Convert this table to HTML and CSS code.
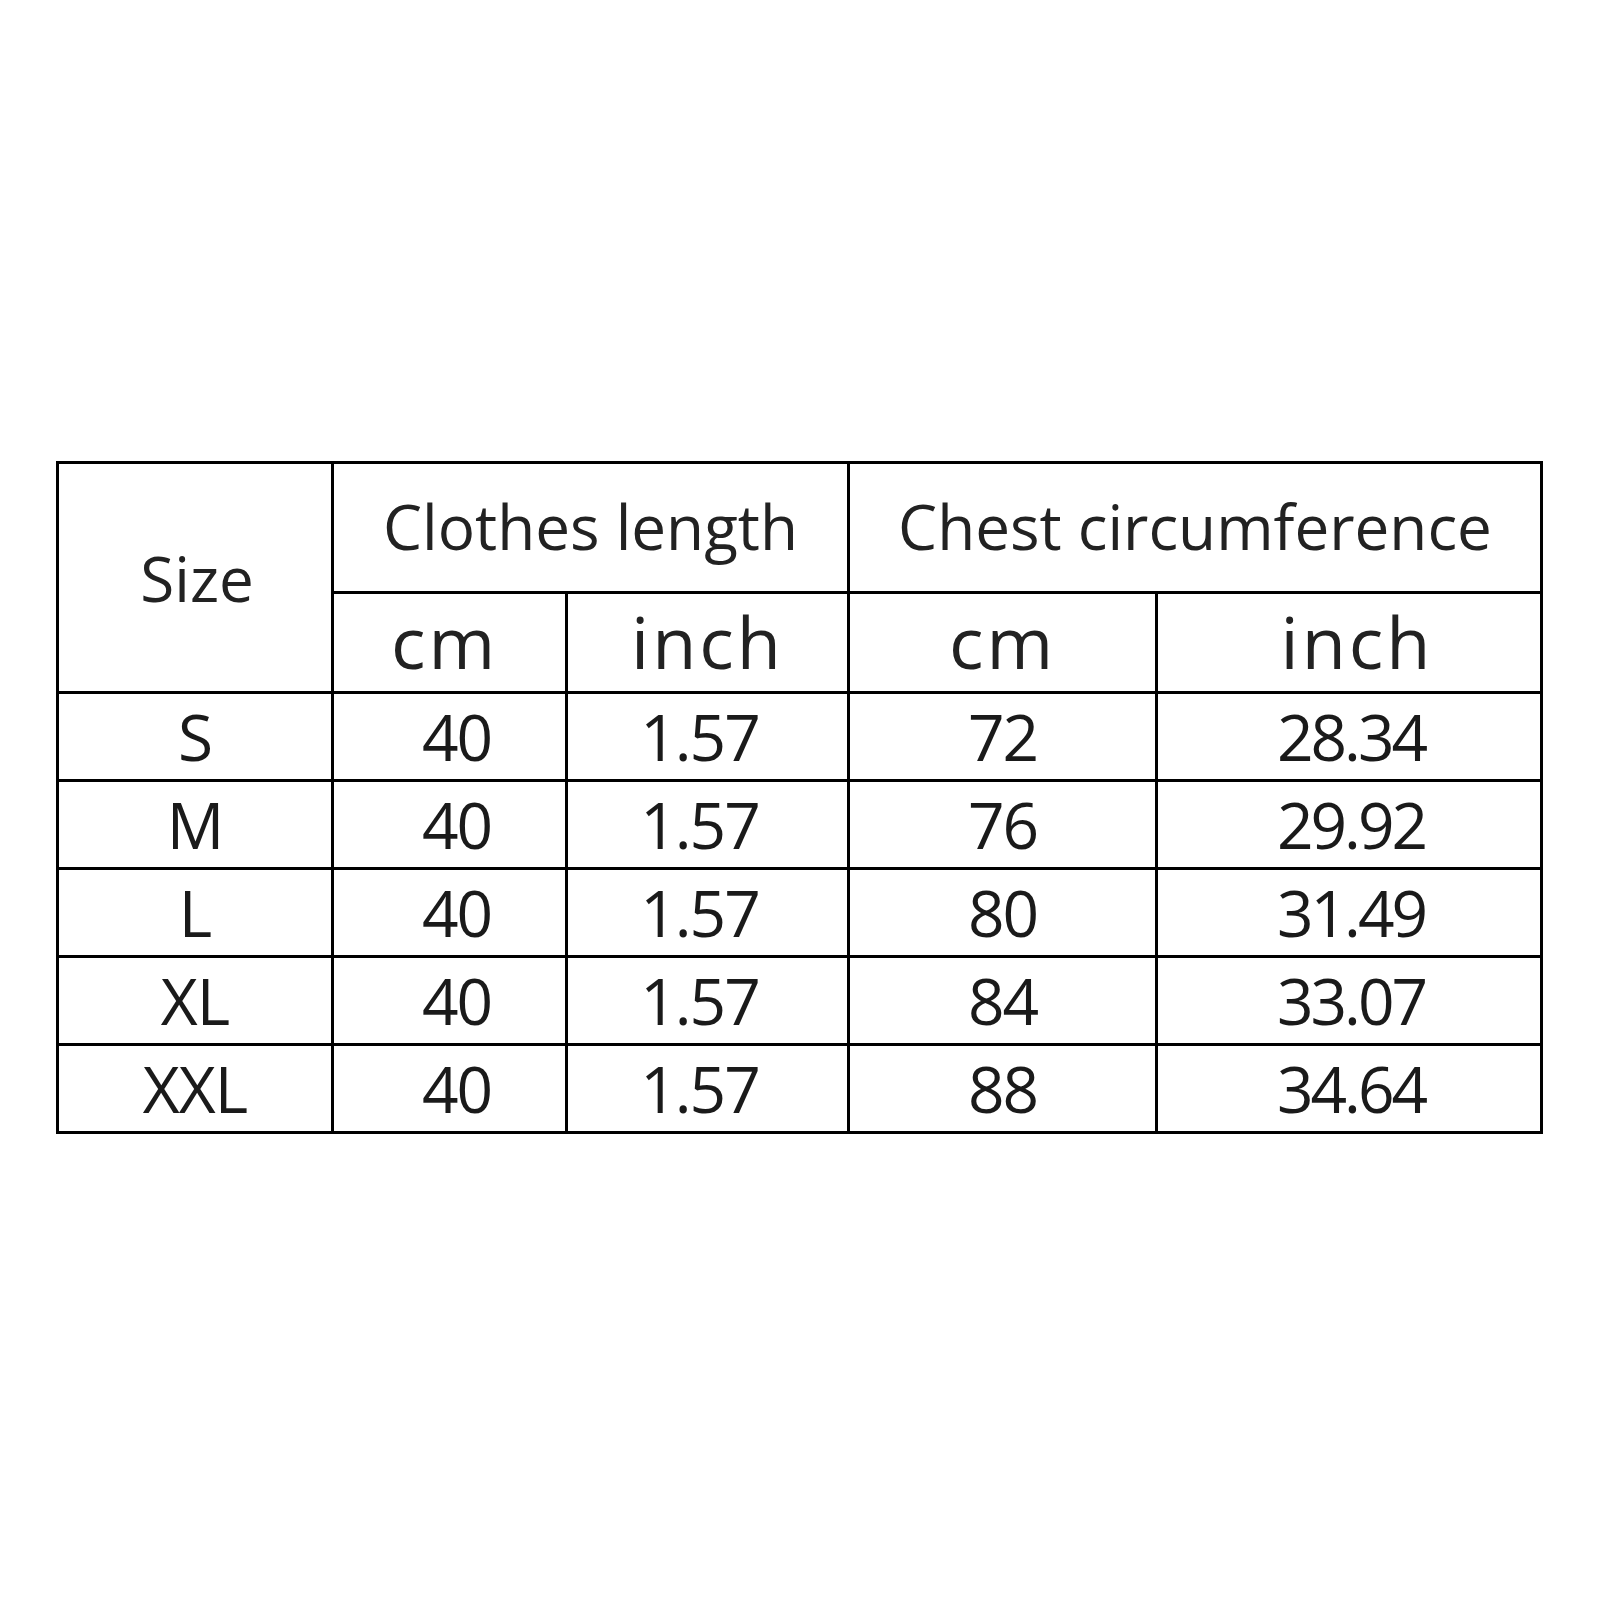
FILE: index.html
```html
<!DOCTYPE html>
<html>
<head>
<meta charset="utf-8">
<link rel="stylesheet" href="styles.css">
</head>
<body>
<div class="page">
  <table class="size-table">
    <colgroup>
      <col class="c-size">
      <col class="c-len-cm">
      <col class="c-len-in">
      <col class="c-chest-cm">
      <col class="c-chest-in">
    </colgroup>
    <thead>
      <tr class="row-head1">
        <th class="head size-head" rowspan="2">Size</th>
        <th class="head" colspan="2">Clothes length</th>
        <th class="head" colspan="2">Chest circumference</th>
      </tr>
      <tr class="row-head2">
        <th class="unit unit-cm1">cm</th>
        <th class="unit">inch</th>
        <th class="unit">cm</th>
        <th class="unit unit-in2">inch</th>
      </tr>
    </thead>
    <tbody>
      <tr class="row-data"><td class="sz">S</td><td class="n40">40</td><td class="n157">1.57</td><td>72</td><td class="nin">28.34</td></tr>
      <tr class="row-data"><td class="sz">M</td><td class="n40">40</td><td class="n157">1.57</td><td>76</td><td class="nin">29.92</td></tr>
      <tr class="row-data"><td class="sz">L</td><td class="n40">40</td><td class="n157">1.57</td><td>80</td><td class="nin">31.49</td></tr>
      <tr class="row-data"><td class="sz">XL</td><td class="n40">40</td><td class="n157">1.57</td><td>84</td><td class="nin">33.07</td></tr>
      <tr class="row-data"><td class="sz">XXL</td><td class="n40">40</td><td class="n157">1.57</td><td>88</td><td class="nin">34.64</td></tr>
    </tbody>
  </table>
</div>
</body>
</html>
```
FILE: styles.css
```css
html, body {
  margin: 0;
  padding: 0;
  background: #ffffff;
}

.page {
  padding: 461px 0 0 56px;
  width: 1600px;
  height: 1600px;
  box-sizing: border-box;
}

.size-table {
  border-collapse: collapse;
  table-layout: fixed;
  width: 1487px;
  border: 3px solid #000;
  font-family: "Open Sans", "Noto Sans", sans-serif;
  color: #1c1c1c;
}

.c-size { width: 275px; }
.c-len-cm { width: 234px; }
.c-len-in { width: 282px; }
.c-chest-cm { width: 308px; }
.c-chest-in { width: 385px; }

.size-table th,
.size-table td {
  border: 3px solid #000;
  padding: 0;
  text-align: center;
  vertical-align: middle;
  font-weight: 400;
  line-height: 1;
}

.row-head1 th { height: 124px; padding-bottom: 3px; }
.row-head2 th { height: 93px; padding-bottom: 4px; }
.row-data td { height: 85px; }

.head {
  font-size: 62px;
  color: #222;
}

.row-head1 th.size-head {
  height: auto;
  padding: 0 0 0 4px;
}

.unit {
  font-size: 72px;
  font-weight: 500;
  letter-spacing: 3px;
  color: #222;
}

.row-head2 th.unit-cm1 {
  padding-right: 10px;
}

.row-head2 th.unit-in2 {
  padding-left: 16px;
}

.row-data td {
  font-size: 64px;
  letter-spacing: -2px;
  color: #1a1a1a;
}

.row-data td.n40 { padding-left: 14px; }
.row-data td.n157 { padding-right: 16px; }
.row-data td.sz { letter-spacing: -1px; }
.row-data td.nin { letter-spacing: -3px; padding-left: 4px; }
```
